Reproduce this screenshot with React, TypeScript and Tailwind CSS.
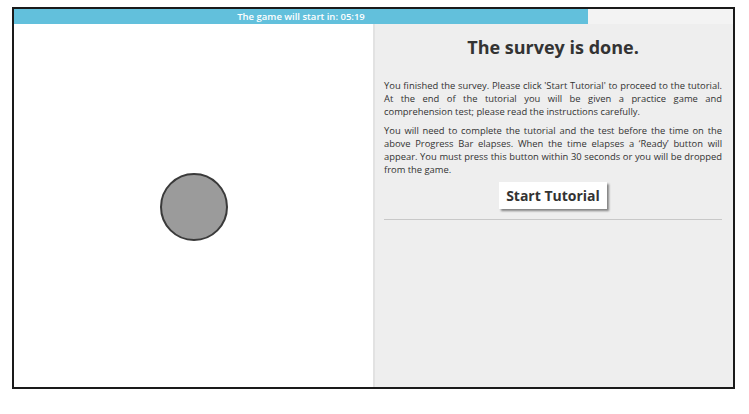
export default function App() {
  return (
    <div className="h-[414px] w-[749px] bg-white pl-[12px] pt-[7px] font-['Open_Sans',sans-serif]">
      <div className="flex h-[382px] w-[723px] flex-col border-2 border-[#1a1a1a] shadow-[inset_0_0_0_1px_#9a9a9a]">
        {/* progress bar */}
        <div className="flex h-[15px] shrink-0 bg-[#f3f3f3]">
          <div className="flex w-[574px] items-center justify-center bg-[#62c0dc] text-[9.5px] font-semibold leading-none text-white">
            The game will start in: 05:19
          </div>
        </div>

        <div className="flex min-h-0 flex-1">
          <div className="flex w-[359px] items-center justify-center bg-white pt-[2px]">
            <div className="h-[68px] w-[68px] rounded-full border-2 border-[#3a3a3a] bg-[#9b9b9b]" />
          </div>

          <div className="flex-1 border-l-2 border-[#e2e2e2] bg-[#eeeeee] pl-[9px] pr-[11px]">
            <h1 className="mt-[11px] text-center text-[18px] font-bold leading-[24px] text-[#333]">
              The survey is done.
            </h1>
            <div className="mt-[20px] space-y-[6px] text-justify text-[9.4px] leading-[13px] text-[#333]">
              <p>
                You finished the survey. Please click 'Start Tutorial' to proceed to the tutorial. At the
                end of the tutorial you will be given a practice game and comprehension test; please read
                the instructions carefully.
              </p>
              <p>
                You will need to complete the tutorial and the test before the time on the above Progress
                Bar elapses. When the time elapses a ‘Ready’ button will appear. You must press this button
                within 30 seconds or you will be dropped from the game.
              </p>
            </div>
            <div className="mt-[6px] flex justify-center">
              <button className="h-[27px] bg-white px-[7px] text-[14px] font-bold text-[#333] shadow-[2px_2px_2px_rgba(0,0,0,0.45)]">
                Start Tutorial
              </button>
            </div>
            <div className="mt-[10px] border-t border-[#c8c8c8]" />
          </div>
        </div>
      </div>
    </div>
  );
}
